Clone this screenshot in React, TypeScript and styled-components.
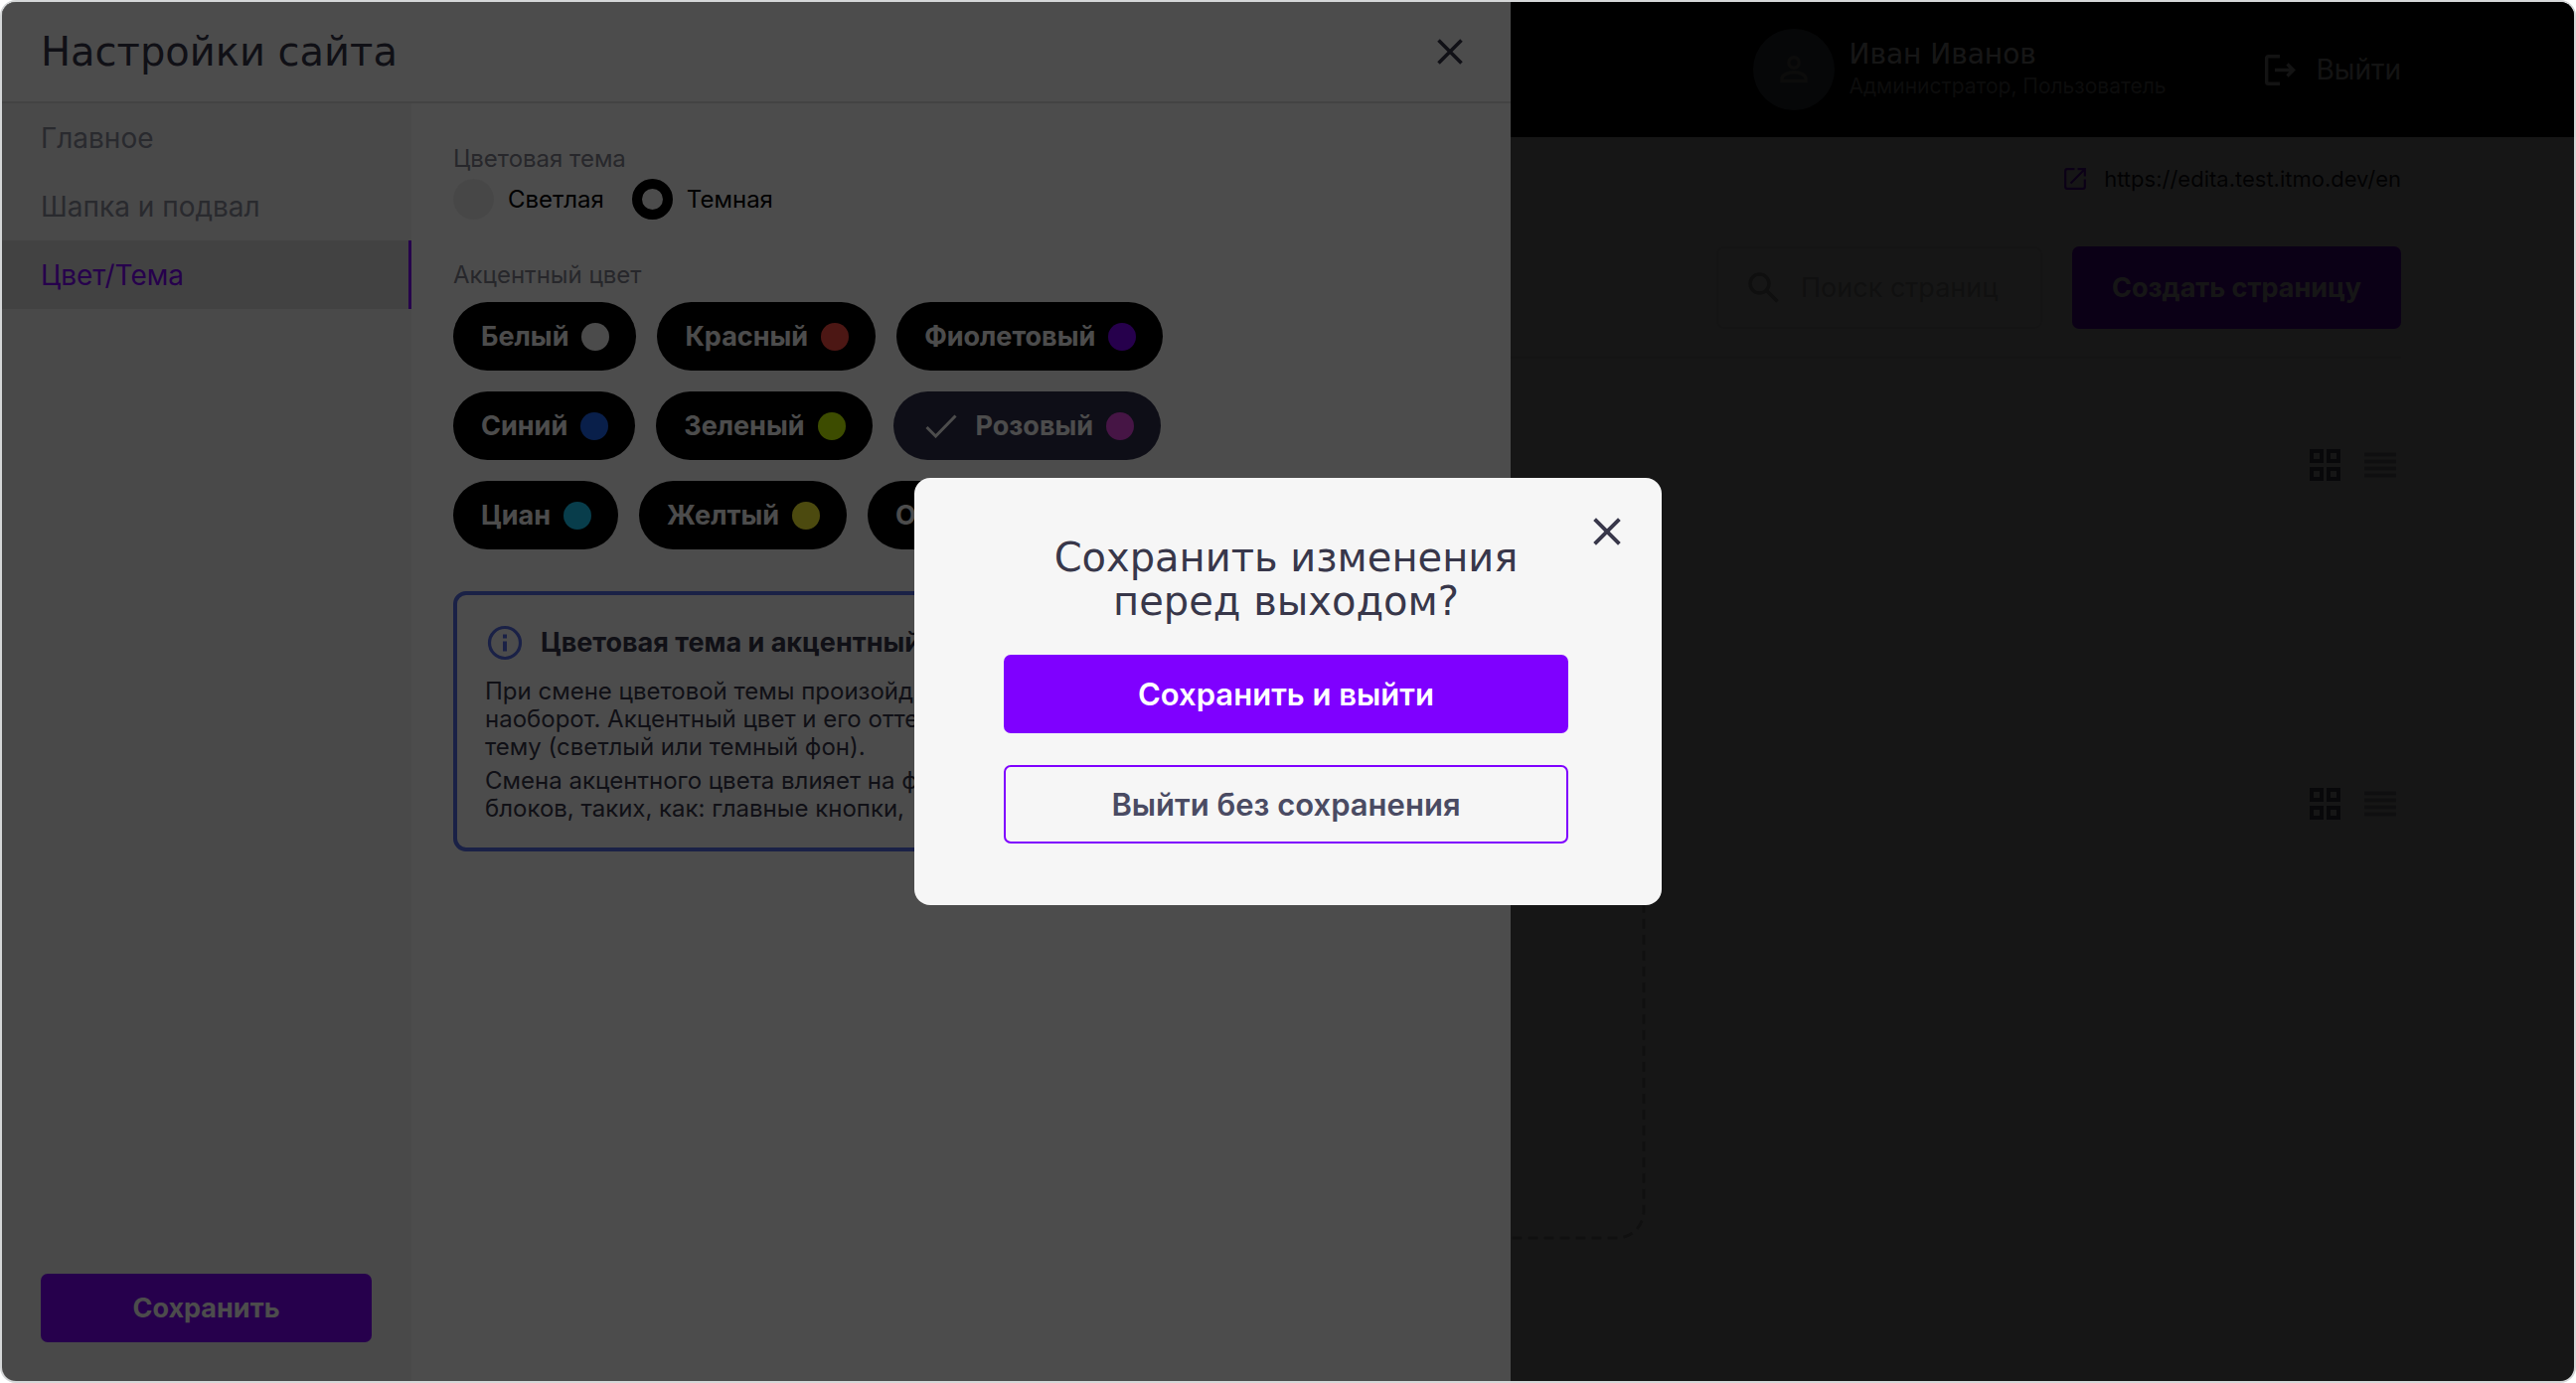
import React from "react";
import styled, { createGlobalStyle } from "styled-components";

const accent = "#7f00ff";
const ink = "#38374a";
const body = '"Inter", "Noto Sans", sans-serif';
const wide = '"DejaVu Sans", "Noto Sans", sans-serif';

const GlobalStyle = createGlobalStyle`
  * { box-sizing: border-box; }
  body { margin: 0; background: #fff; font-family: ${body}; }
  h1, h2, h3, p { margin: 0; font-weight: 400; }
  button, input { font-family: inherit; }
  button { cursor: pointer; }
  svg { display: block; flex: none; }
`;

const Shell = styled.div`
  position: relative;
  min-height: 100vh;
  overflow: hidden;
  border: 2px solid #d5d7d8;
  border-radius: 16px;
  background: #fff;
`;

const Container = styled.div`
  width: 100%;
  max-width: 2240px;
  margin: 0 auto;
`;

const TopBar = styled.header`
  background: #000;
  color: #fff;
`;

const TopBarInner = styled(Container)`
  display: flex;
  align-items: center;
  justify-content: flex-end;
  gap: 100px;
  height: 136px;
`;

const User = styled.div`
  display: flex;
  align-items: center;
  gap: 14px;
`;

const Avatar = styled.div`
  display: grid;
  place-items: center;
  width: 82px;
  height: 82px;
  border-radius: 50%;
  background: #48525e;
  color: #8c8580;
`;

const UserName = styled.p`
  font: 400 28px/34px ${wide};
`;

const UserRoles = styled.p`
  font-size: 21px;
  line-height: 30px;
  color: #8a8a8a;
`;

const Logout = styled.button`
  display: flex;
  align-items: center;
  gap: 20px;
  padding: 0;
  border: 0;
  background: none;
  color: #d8d8d8;
  font-size: 28px;
  line-height: 34px;
`;

const SiteLink = styled.a`
  display: flex;
  align-items: center;
  justify-content: flex-end;
  gap: 18px;
  padding: 28px 0 54px;
  color: #1f1f2b;
  font-size: 22px;
  line-height: 28px;
  text-decoration: none;

  svg { color: ${accent}; }
`;

const Toolbar = styled.div`
  display: flex;
  justify-content: flex-end;
  gap: 30px;
  padding-bottom: 28px;
  border-bottom: 2px solid #e2e2e2;
`;

const Search = styled.label`
  display: flex;
  align-items: center;
  gap: 22px;
  width: 328px;
  height: 83px;
  padding: 0 20px 0 30px;
  border: 2px solid #e6e6e6;
  border-radius: 8px;
  color: #a8a8a8;
`;

const SearchInput = styled.input`
  flex: 1;
  min-width: 0;
  padding: 0;
  border: 0;
  outline: 0;
  background: none;
  font-size: 27px;
  line-height: 34px;

  &::placeholder { color: #b4b4b4; opacity: 1; }
`;

const Filled = styled.button<{ $size: "small" | "medium" | "large" }>`
  height: ${(p) => ({ small: 69, medium: 83, large: 79 })[p.$size]}px;
  padding: 0 40px;
  border: 0;
  border-radius: 7px;
  background: ${accent};
  color: #fff;
  font-size: ${(p) => (p.$size === "large" ? 31 : 27)}px;
  font-weight: ${(p) => (p.$size === "large" ? 600 : 700)};
`;

const Outlined = styled(Filled)`
  border: 2px solid ${accent};
  background: none;
  color: #4a4b63;
`;

const PageSection = styled.section`
  min-height: 341px;
  padding: 91px 5px 0 0;
`;

const Views = styled.div`
  display: flex;
  align-items: center;
  justify-content: flex-end;
  gap: 24px;
`;

const IconButton = styled.button<{ $color: string }>`
  padding: 0;
  border: 0;
  background: none;
  color: ${(p) => p.$color};
`;

const DropZone = styled.div`
  max-width: 1478px;
  height: 386px;
  margin-top: 35px;

  svg { overflow: visible; }
`;

const Shade = styled.div`
  position: absolute;
  inset: 0;
  background: rgba(0, 0, 0, 0.7);
`;

const Drawer = styled.aside`
  position: absolute;
  inset: 0 auto 0 0;
  display: flex;
  flex-direction: column;
  width: 1518px;
  max-width: 100%;
  background: #fff;
`;

const DrawerHeader = styled.header`
  display: flex;
  align-items: center;
  justify-content: space-between;
  height: 102px;
  padding: 0 48px 0 39px;
  border-bottom: 2px solid #e2e2e2;
`;

const DrawerTitle = styled.h1`
  font: 400 40px/48px ${wide};
  color: ${ink};
`;

const DrawerBody = styled.div`
  display: flex;
  flex: 1;
`;

const Sidebar = styled.nav`
  display: flex;
  flex-direction: column;
  justify-content: space-between;
  width: 412px;
  background: #f6f6f6;
`;

const Tabs = styled.div`
  display: flex;
  flex-direction: column;
`;

const Tab = styled.a<{ $active?: boolean }>`
  height: 69px;
  padding-left: 39px;
  border-right: 3px solid ${(p) => (p.$active ? accent : "#f3f3f3")};
  background: ${(p) => (p.$active ? "#dcdcdc" : "transparent")};
  color: ${(p) => (p.$active ? accent : "#8b8c9c")};
  font-size: 28px;
  line-height: 71px;
  text-decoration: none;
`;

const SidebarFooter = styled.div`
  display: grid;
  padding: 0 40px 39px 39px;
`;

const Settings = styled.div`
  flex: 1;
  padding: 42px 42px;
`;

const Group = styled.fieldset`
  margin: 0;
  padding: 0;
  border: 0;
`;

const Caption = styled.legend`
  padding: 0;
  color: #83848f;
  font-size: 24px;
  line-height: 28px;
`;

const Radios = styled.div`
  display: flex;
  gap: 28px;
  padding: 6px 0 42px;
`;

const RadioLabel = styled.label`
  display: flex;
  align-items: center;
  gap: 14px;
  color: #000;
  font-size: 24px;
  line-height: 41px;
`;

const Radio = styled.input`
  appearance: none;
  width: 41px;
  height: 41px;
  margin: 0;
  border-radius: 50%;
  background: #efefef;

  &:checked { border: 10px solid #000; background: #fff; }
`;

const Chips = styled.div`
  display: flex;
  flex-wrap: wrap;
  gap: 21px;
  max-width: 762px;
  padding: 13px 0 42px;
`;

const Chip = styled.button<{ $selected?: boolean }>`
  display: flex;
  align-items: center;
  gap: 13px;
  height: 69px;
  padding: 0 27px 0 28px;
  border: 0;
  border-radius: 35px;
  background: ${(p) => (p.$selected ? "#2f2f4d" : "#000")};
  color: #fff;
  font-size: 27px;
  font-weight: 700;
`;

const CheckMark = styled.svg`
  margin: 0 6px 0 4px;
`;

const Dot = styled.span<{ $color: string }>`
  width: 28px;
  height: 28px;
  border-radius: 50%;
  background: ${(p) => p.$color};
`;

const Note = styled.section`
  max-width: 762px;
  padding: 30px 28px 25px;
  border: 4px solid #576eec;
  border-radius: 13px;
  color: ${ink};
  font-size: 24px;
  line-height: 28px;
  white-space: nowrap;
`;

const NoteHead = styled.div`
  display: flex;
  align-items: center;
  gap: 18px;
  padding-bottom: 17px;

  svg { color: #576eec; }
`;

const NoteTitle = styled.h2`
  font-size: 27px;
  font-weight: 700;
  line-height: 36px;
`;

const NoteText = styled.p`
  & + & { margin-top: 6px; }
`;

const ModalLayer = styled(Shade)`
  display: grid;
  place-items: center;
`;

const Modal = styled.div`
  position: relative;
  display: flex;
  flex-direction: column;
  gap: 32px;
  width: 752px;
  max-width: 100%;
  padding: 58px 94px 62px 90px;
  border-radius: 16px;
  background: #f6f6f6;
`;

const ModalTitle = styled.h2`
  font: 400 40px/44px ${wide};
  color: ${ink};
  text-align: center;
`;

const ModalClose = styled(IconButton)`
  position: absolute;
  top: 40px;
  right: 41px;
`;

const Cross = ({ size }: { size: number }) => (
  <svg width={size} height={size} viewBox="0 0 26 26" stroke="currentColor" strokeWidth="3.6" fill="none">
    <path d="M1.5 1.5 24.5 24.5M24.5 1.5 1.5 24.5" />
  </svg>
);

const GridIcon = () => (
  <svg width="31" height="32" viewBox="0 0 31 32" fill="none" stroke="currentColor" strokeWidth="4">
    <path d="M2 2h10v10H2zM19 2h10v10H19zM2 20h10v10H2zM19 20h10v10H19z" />
  </svg>
);

const ListIcon = () => (
  <svg width="32" height="26" viewBox="0 0 32 26" stroke="currentColor" strokeWidth="4">
    <path d="M0 2.5h32M0 9.5h32M0 16.5h32M0 23.5h32" />
  </svg>
);

const ViewSwitch = () => (
  <Views>
    <IconButton $color="#5c5d74" aria-label="Плитка"><GridIcon /></IconButton>
    <IconButton $color="#b2b2ba" aria-label="Список"><ListIcon /></IconButton>
  </Views>
);

const colours = [
  { name: "Белый", value: "#fafafa" },
  { name: "Красный", value: "#ff4d43" },
  { name: "Фиолетовый", value: accent },
  { name: "Синий", value: "#2168f7" },
  { name: "Зеленый", value: "#cbff00" },
  { name: "Розовый", value: "#e946e6", selected: true },
  { name: "Циан", value: "#1bcbfa" },
  { name: "Желтый", value: "#fff735" },
  { name: "Оранжевый", value: "#ff8a1e" },
];

export default function App() {
  return (
    <>
      <GlobalStyle />
      <Shell>
        <TopBar>
          <TopBarInner>
            <User>
              <Avatar>
                <svg width="28" height="28" viewBox="0 0 28 28" fill="none" stroke="currentColor" strokeWidth="3.4">
                  <circle cx="14" cy="7" r="5.2" />
                  <path d="M2 25.5v-2.5c0-4 7-6.2 12-6.2s12 2.2 12 6.2v2.5z" />
                </svg>
              </Avatar>
              <div>
                <UserName>Иван Иванов</UserName>
                <UserRoles>Администратор, Пользователь</UserRoles>
              </div>
            </User>
            <Logout>
              <svg width="31" height="31" viewBox="0 0 31 31" fill="none" stroke="currentColor" strokeWidth="3.4">
                <path d="M15 1.7H3.5Q1.7 1.7 1.7 3.5V27.5Q1.7 29.3 3.5 29.3H15M10 15.5H28" />
                <path d="M22.5 9.5 28.5 15.5 22.5 21.5" />
              </svg>
              Выйти
            </Logout>
          </TopBarInner>
        </TopBar>

        <Container as="main">
          <SiteLink href="#site">
            <svg width="22" height="22" viewBox="0 0 22 22" fill="none" stroke="currentColor" strokeWidth="2.2">
              <path d="M10.5 1.2H3Q1.2 1.2 1.2 3V19Q1.2 20.8 3 20.8H19Q20.8 20.8 20.8 19V11.5" />
              <path d="M13.5 1.2H20.8V8.5M20.5 1.5 6.5 15.5" />
            </svg>
            https://edita.test.itmo.dev/en
          </SiteLink>
          <Toolbar>
            <Search>
              <svg width="31" height="31" viewBox="0 0 31 31" fill="none" stroke="currentColor" strokeWidth="3.6">
                <circle cx="11.5" cy="11.5" r="9.5" />
                <path d="M18.5 18.5 29.5 29.5" />
              </svg>
              <SearchInput type="text" placeholder="Поиск страниц" aria-label="Поиск страниц" />
            </Search>
            <Filled $size="medium">Создать страницу</Filled>
          </Toolbar>
          <PageSection><ViewSwitch /></PageSection>
          <PageSection>
            <ViewSwitch />
            <DropZone>
              <svg width="100%" height="100%" fill="none">
                <rect width="100%" height="100%" rx="27" stroke="#b4b4b4" strokeWidth="3" strokeDasharray="10 6" />
              </svg>
            </DropZone>
          </PageSection>
        </Container>

        <Shade />

        <Drawer>
          <DrawerHeader>
            <DrawerTitle>Настройки сайта</DrawerTitle>
            <IconButton $color={ink} aria-label="Закрыть настройки"><Cross size={26} /></IconButton>
          </DrawerHeader>
          <DrawerBody>
            <Sidebar>
              <Tabs>
                <Tab href="#main">Главное</Tab>
                <Tab href="#header">Шапка и подвал</Tab>
                <Tab href="#theme" $active>Цвет/Тема</Tab>
              </Tabs>
              <SidebarFooter>
                <Filled $size="small">Сохранить</Filled>
              </SidebarFooter>
            </Sidebar>
            <Settings>
              <Group>
                <Caption>Цветовая тема</Caption>
                <Radios>
                  <RadioLabel><Radio type="radio" name="theme" />Светлая</RadioLabel>
                  <RadioLabel><Radio type="radio" name="theme" defaultChecked />Темная</RadioLabel>
                </Radios>
              </Group>
              <Group>
                <Caption>Акцентный цвет</Caption>
                <Chips>
                  {colours.map((c) => (
                    <Chip key={c.name} $selected={c.selected} aria-pressed={!!c.selected}>
                      {c.selected && (
                        <CheckMark width="32" height="24" viewBox="0 0 32 24" fill="none" stroke="currentColor" strokeWidth="3">
                          <path d="M1.5 13 10.5 22 30.5 1.5" />
                        </CheckMark>
                      )}
                      {c.name}
                      <Dot $color={c.value} />
                    </Chip>
                  ))}
                </Chips>
              </Group>
              <Note>
                <NoteHead>
                  <svg width="38" height="36" viewBox="0 0 38 36" fill="none" stroke="currentColor">
                    <circle cx="20" cy="18" r="15.5" strokeWidth="3.2" />
                    <path d="M20 9.5v4M20 16.5v10" strokeWidth="4" />
                  </svg>
                  <NoteTitle>Цветовая тема и акцентный</NoteTitle>
                </NoteHead>
                <NoteText>
                  При смене цветовой темы произойд<br />
                  наоборот. Акцентный цвет и его отте<br />
                  тему (светлый или темный фон).
                </NoteText>
                <NoteText>
                  Смена акцентного цвета влияет на ф<br />
                  блоков, таких, как: главные кнопки,
                </NoteText>
              </Note>
            </Settings>
          </DrawerBody>
        </Drawer>

        <ModalLayer>
          <Modal role="dialog" aria-modal="true" aria-labelledby="save-title">
            <ModalClose $color={ink} aria-label="Закрыть"><Cross size={28} /></ModalClose>
            <ModalTitle id="save-title">Сохранить изменения<br />перед выходом?</ModalTitle>
            <Filled $size="large">Сохранить и выйти</Filled>
            <Outlined $size="large">Выйти без сохранения</Outlined>
          </Modal>
        </ModalLayer>
      </Shell>
    </>
  );
}
